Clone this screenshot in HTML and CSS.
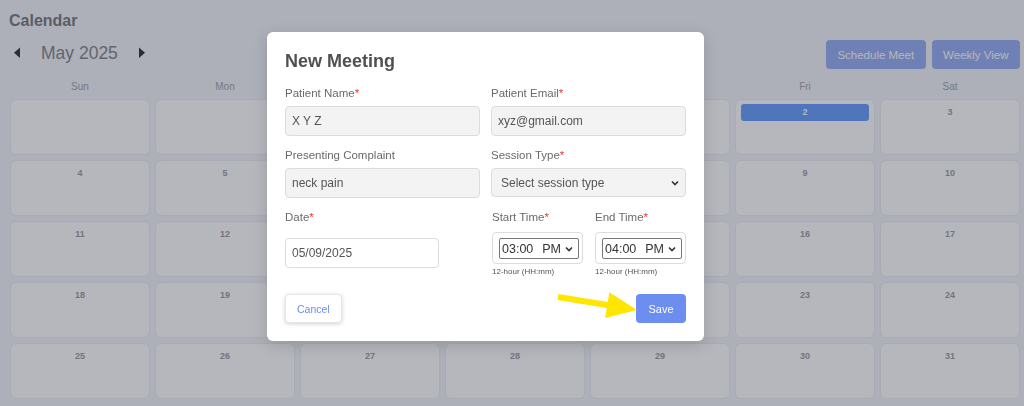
FILE: index.html
```html
<!DOCTYPE html>
<html lang="en">
<head>
<meta charset="utf-8">
<title>Calendar</title>
<link rel="stylesheet" href="styles.css">
</head>
<body>
<div class="page">
  <h1 class="title">Calendar</h1>
  <div class="nav">
    <div class="month-nav">
      <svg class="arrow" width="8" height="12" viewBox="0 0 8 12"><polygon points="7,0.5 7,11 1,5.75"/></svg>
      <span class="month">May 2025</span>
      <svg class="arrow arrow-right" width="8" height="12" viewBox="0 0 8 12"><polygon points="1,0.5 1,11 7,5.75"/></svg>
    </div>
    <div class="actions">
      <button class="btn-top">Schedule Meet</button>
      <button class="btn-top">Weekly View</button>
    </div>
  </div>
  <div class="weekdays">
    <div>Sun</div><div>Mon</div><div>Tue</div><div>Wed</div><div>Thu</div><div>Fri</div><div>Sat</div>
  </div>
  <div class="grid">
    <div class="cell"></div><div class="cell"></div><div class="cell"></div><div class="cell"></div>
    <div class="cell"><div class="day">1</div></div>
    <div class="cell"><div class="day today">2</div></div>
    <div class="cell"><div class="day">3</div></div>
    <div class="cell"><div class="day">4</div></div>
    <div class="cell"><div class="day">5</div></div>
    <div class="cell"><div class="day">6</div></div>
    <div class="cell"><div class="day">7</div></div>
    <div class="cell"><div class="day">8</div></div>
    <div class="cell"><div class="day">9</div></div>
    <div class="cell"><div class="day">10</div></div>
    <div class="cell"><div class="day">11</div></div>
    <div class="cell"><div class="day">12</div></div>
    <div class="cell"><div class="day">13</div></div>
    <div class="cell"><div class="day">14</div></div>
    <div class="cell"><div class="day">15</div></div>
    <div class="cell"><div class="day">16</div></div>
    <div class="cell"><div class="day">17</div></div>
    <div class="cell"><div class="day">18</div></div>
    <div class="cell"><div class="day">19</div></div>
    <div class="cell"><div class="day">20</div></div>
    <div class="cell"><div class="day">21</div></div>
    <div class="cell"><div class="day">22</div></div>
    <div class="cell"><div class="day">23</div></div>
    <div class="cell"><div class="day">24</div></div>
    <div class="cell"><div class="day">25</div></div>
    <div class="cell"><div class="day">26</div></div>
    <div class="cell"><div class="day">27</div></div>
    <div class="cell"><div class="day">28</div></div>
    <div class="cell"><div class="day">29</div></div>
    <div class="cell"><div class="day">30</div></div>
    <div class="cell"><div class="day">31</div></div>
  </div>
</div>

<div class="backdrop">
  <div class="modal">
    <h2 class="modal-title">New Meeting</h2>
    <div class="form-grid">
      <div class="field">
        <label class="label">Patient Name<span class="req">*</span></label>
        <input class="input filled" type="text" value="X Y Z" readonly>
      </div>
      <div class="field">
        <label class="label">Patient Email<span class="req">*</span></label>
        <input class="input filled" type="text" value="xyz@gmail.com" readonly>
      </div>
      <div class="field">
        <label class="label">Presenting Complaint</label>
        <input class="input filled" type="text" value="neck pain" readonly>
      </div>
      <div class="field">
        <label class="label">Session Type<span class="req">*</span></label>
        <div class="select">
          <span>Select session type</span>
          <svg class="chev" width="8" height="6" viewBox="0 0 8 6"><polyline points="1,1.5 4,4.5 7,1.5"/></svg>
        </div>
      </div>
      <div class="field">
        <label class="label date-label">Date<span class="req">*</span></label>
        <input class="input date" type="text" value="05/09/2025" readonly>
      </div>
      <div class="time-pair">
        <div class="field">
          <label class="label time-label">Start Time<span class="req">*</span></label>
          <div class="time-box">
            <div class="time-ctl"><span>03:00</span><span class="ampm">PM</span><svg class="tchev" width="8" height="6" viewBox="0 0 8 6"><polyline points="1,1.5 4,4.5 7,1.5"/></svg></div>
          </div>
          <div class="hint">12-hour (HH:mm)</div>
        </div>
        <div class="field">
          <label class="label time-label">End Time<span class="req">*</span></label>
          <div class="time-box">
            <div class="time-ctl"><span>04:00</span><span class="ampm">PM</span><svg class="tchev" width="8" height="6" viewBox="0 0 8 6"><polyline points="1,1.5 4,4.5 7,1.5"/></svg></div>
          </div>
          <div class="hint">12-hour (HH:mm)</div>
        </div>
      </div>
    </div>
    <div class="modal-actions">
      <button class="btn-cancel">Cancel</button>
      <button class="btn-save">Save</button>
    </div>
    <svg class="pointer" width="95" height="40" viewBox="550 285 95 40">
      <polygon points="558.5,294 607.8,302.1 609.4,292.3 637,310 605.2,317.9 606.8,308.1 557.5,300" fill="#ffe600"/>
    </svg>
  </div>
</div>
</body>
</html>
```

FILE: styles.css
```css
* { box-sizing: border-box; }

html, body {
  margin: 0;
  padding: 0;
  width: 1024px;
  height: 406px;
  overflow: hidden;
  background: #f4f5f8;
  font-family: "Liberation Sans", Arial, sans-serif;
}

.page {
  padding: 11px 4px 0 10px;
}

.title {
  margin: 0 0 0 -1px;
  font-size: 16px;
  line-height: 20px;
  font-weight: bold;
  color: #7f8082;
}

.nav {
  margin-top: 9px;
  display: flex;
  justify-content: space-between;
  align-items: center;
  height: 29px;
}

.month-nav {
  display: flex;
  align-items: center;
  margin-left: 3px;
  margin-top: -3px;
}

.arrow { fill: #3a3a3c; display: block; }
.arrow-right { margin-left: 20px; }

.month {
  margin-left: 20px;
  font-size: 17.5px;
  color: #888a8e;
}

.actions {
  display: flex;
  gap: 6px;
}

.btn-top {
  height: 29px;
  padding: 0 11.5px;
  border: none;
  border-radius: 4px;
  background: #9bb1f2;
  color: #ffffff;
  font-family: "Liberation Sans", Arial, sans-serif;
  font-size: 11.5px;
}

.weekdays {
  margin-top: 12px;
  display: grid;
  grid-template-columns: repeat(7, 140px);
  column-gap: 5px;
  text-align: center;
  font-size: 10px;
  line-height: 12px;
  color: #a6a7aa;
}

.grid {
  margin-top: 6px;
  display: grid;
  grid-template-columns: repeat(7, 140px);
  grid-auto-rows: 56px;
  gap: 5px;
}

.cell {
  background: #ffffff;
  border: 1px solid #eceef2;
  border-radius: 6px;
  padding: 4px 5px;
}

.day {
  height: 17px;
  line-height: 17px;
  text-align: center;
  font-size: 9px;
  font-weight: bold;
  color: #a0a1a4;
}

.day.today {
  background: #6ea2fb;
  color: #ffffff;
  border-radius: 3px;
}

/* Modal */
.backdrop {
  position: fixed;
  inset: 0;
  background: rgba(10, 15, 35, 0.3);
}

.modal {
  position: absolute;
  left: 267px;
  top: 32px;
  width: 437px;
  background: #ffffff;
  border-radius: 6px;
  padding: 18px;
  box-shadow: 0 4px 16px rgba(0, 0, 0, 0.15);
}

.modal-title {
  margin: 0 0 14px 0;
  font-size: 18px;
  line-height: 22px;
  font-weight: bold;
  color: #505050;
}

.form-grid {
  display: grid;
  grid-template-columns: 195px 195px;
  column-gap: 11px;
  row-gap: 12px;
}

.field {
  display: flex;
  flex-direction: column;
  align-items: flex-start;
}

.label {
  font-size: 11.5px;
  line-height: 14px;
  color: #6a6a6a;
  margin-bottom: 6px;
}

.req { color: #e53935; }

.input {
  width: 100%;
  height: 30px;
  border: 1px solid #dcdcdc;
  border-radius: 4px;
  padding: 0 6px;
  font-family: "Liberation Sans", Arial, sans-serif;
  font-size: 12px;
  color: #555555;
  background: #ffffff;
  outline: none;
}

.input.filled { background: #f3f3f3; }

.date-label { margin-bottom: 14px; }
.input.date { width: 154px; }

.select {
  width: 100%;
  height: 29px;
  border: 1px solid #dcdcdc;
  border-radius: 4px;
  background: #f3f3f3;
  padding: 0 6px 0 9px;
  display: flex;
  align-items: center;
  justify-content: space-between;
  font-size: 12px;
  color: #555555;
}

.chev, .tchev {
  fill: none;
  stroke: #333333;
  stroke-width: 1.6;
  display: block;
}

.time-pair {
  display: grid;
  grid-template-columns: 91px 91px;
  column-gap: 12px;
  padding-left: 1px;
}

.time-label { margin-bottom: 8px; }

.time-box {
  width: 91px;
  height: 32px;
  border: 1px solid #dddddd;
  border-radius: 4px;
  padding: 5px 0 0 6px;
}

.time-ctl {
  width: 80px;
  height: 21px;
  border: 1px solid #777777;
  border-radius: 2px;
  display: flex;
  align-items: center;
  padding-left: 2px;
  font-size: 12.5px;
  color: #333333;
}

.ampm { margin-left: 9px; }
.tchev { margin-left: 4px; }

.hint {
  margin-top: 3px;
  font-size: 8px;
  line-height: 10px;
  color: #555555;
}

.modal-actions {
  margin-top: 17px;
  display: flex;
  justify-content: space-between;
  align-items: center;
}

.btn-cancel {
  height: 29px;
  padding: 0 11px;
  background: #ffffff;
  border: 1px solid #e6e6e6;
  border-radius: 4px;
  box-shadow: 0 1px 4px rgba(0, 0, 0, 0.18);
  color: #6b8ef0;
  font-family: "Liberation Sans", Arial, sans-serif;
  font-size: 10.5px;
}

.btn-save {
  height: 29px;
  width: 50px;
  background: #6b8ef0;
  border: none;
  border-radius: 4px;
  color: #ffffff;
  font-family: "Liberation Sans", Arial, sans-serif;
  font-size: 11px;
}

.pointer {
  position: absolute;
  left: 283px;
  top: 253px;
}
```
